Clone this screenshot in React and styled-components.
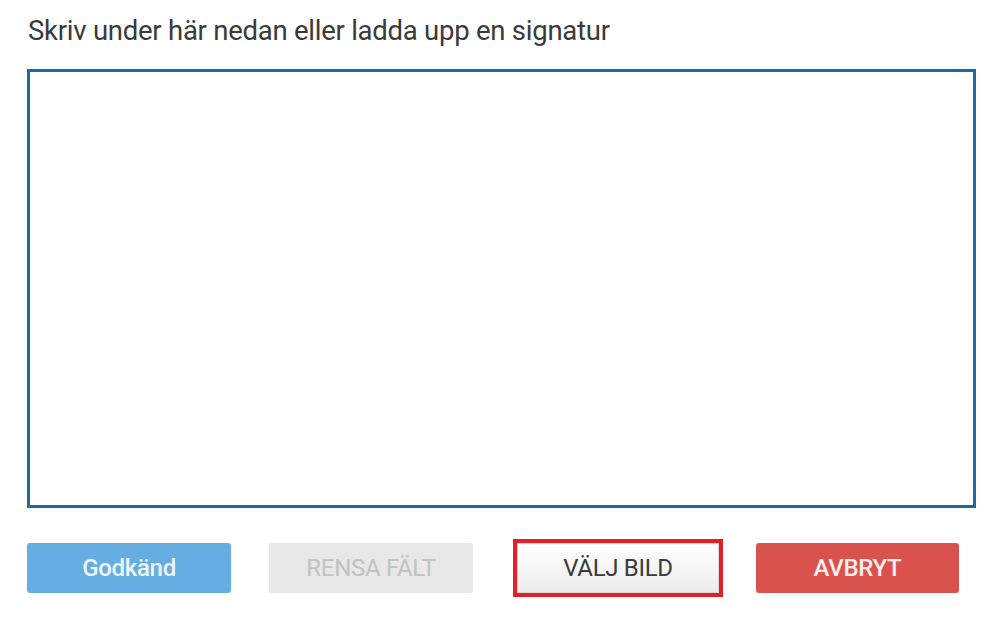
import React from "react";
import styled, { createGlobalStyle, css } from "styled-components";

const Global = createGlobalStyle`
  html, body { margin: 0; padding: 0; background: #ffffff; }
  body { font-family: Roboto, "Liberation Sans", Arial, sans-serif; }
`;

const Page = styled.div`
  width: 1000px;
  height: 618px;
  box-sizing: border-box;
  padding: 15px 24px 0 27px;
  display: flex;
  flex-direction: column;
`;

const Title = styled.div`
  font-size: 27.5px;
  color: #3a3a3a;
  line-height: 32px;
  letter-spacing: -0.25px;
  margin-left: 1px;
`;

const Canvas = styled.div`
  margin-top: 22px;
  width: 949px;
  height: 439px;
  box-sizing: border-box;
  border: 3px solid #1f68a6;
  background: #ffffff;
`;

const Actions = styled.div`
  margin-top: 31px;
  display: flex;
  align-items: center;
`;

const variants = {
  primary: css`
    background: #66ade1;
    color: #eef6fc;
  `,
  disabled: css`
    background: #e8e8e8;
    color: #c2c2c2;
    font-weight: 400;
  `,
  default: css`
    background: linear-gradient(#ffffff, #ececec);
    color: #3b3b3b;
    font-weight: 400;
    border: 1px solid #d8d8d8;
    border-radius: 0;
  `,
  danger: css`
    background: #da524e;
    color: #fbeeee;
  `,
};

const Button = styled.button`
  width: ${(p) => p.$w || 204}px;
  height: 50px;
  margin-left: ${(p) => p.$ml || 0}px;
  box-sizing: border-box;
  border: none;
  border-radius: 3px;
  font-family: Roboto, "Liberation Sans", Arial, sans-serif;
  font-size: 24px;
  font-weight: 500;
  letter-spacing: -0.3px;
  padding: 0;
  display: flex;
  align-items: center;
  justify-content: center;
  ${(p) => variants[p.$variant]}
`;

const Highlight = styled.div`
  margin-left: ${(p) => p.$ml}px;
  padding: 0;
  border: 4px solid #e3202a;
  display: flex;
`;

export default function App() {
  return (
    <>
      <Global />
      <Page>
        <Title>Skriv under här nedan eller ladda upp en signatur</Title>
        <Canvas />
        <Actions>
          <Button $variant="primary">Godkänd</Button>
          <Button $variant="disabled" $ml={38}>RENSA FÄLT</Button>
          <Highlight $ml={40}>
            <Button $variant="default" $w={202}>VÄLJ BILD</Button>
          </Highlight>
          <Button $variant="danger" $ml={33} $w={203}>AVBRYT</Button>
        </Actions>
      </Page>
    </>
  );
}
